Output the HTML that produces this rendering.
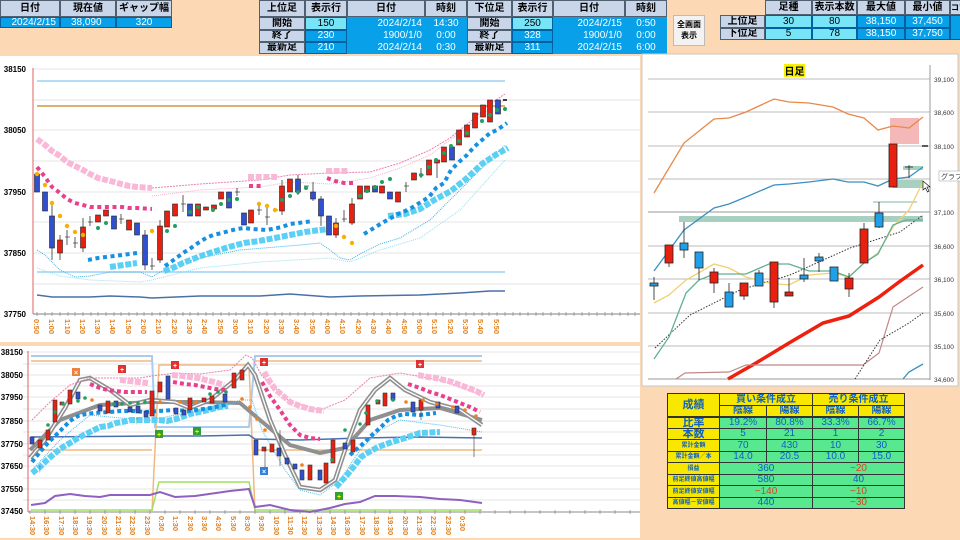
<!DOCTYPE html>
<html><head><meta charset="utf-8">
<style>
*{margin:0;padding:0;box-sizing:border-box}
body{width:960px;height:540px;background:#fdd8b4;position:relative;overflow:hidden;font-family:"Liberation Sans","Noto Sans CJK JP",sans-serif}
.c{position:absolute;font-size:10px;text-align:center;line-height:1;display:flex;align-items:center;justify-content:center;border:1px solid #506070;white-space:nowrap;overflow:hidden}
.h{background:#c9d6ea;color:#000;font-weight:bold}
.b{background:#08a0e8;color:#fff;border-color:#0060a0}
.lc{background:#78e4f8;color:#000;border-color:#0060a0}
svg{position:absolute;left:0;top:0}
</style></head><body>
<div class="c h" style="left:0;top:0;width:60px;height:17px">日付</div>
<div class="c h" style="left:60px;top:0;width:56px;height:17px">現在値</div>
<div class="c h" style="left:116px;top:0;width:56px;height:17px">ギャップ幅</div>
<div class="c b" style="left:0;top:17px;width:60px;height:11px;justify-content:flex-end;padding-right:3px">2024/2/15</div>
<div class="c b" style="left:60px;top:17px;width:56px;height:11px;justify-content:flex-start;padding-left:10px">38,090</div>
<div class="c b" style="left:116px;top:17px;width:56px;height:11px">320</div>
<div class="c h" style="left:259px;top:0;width:46px;height:17px">上位足</div>
<div class="c h" style="left:305px;top:0;width:42px;height:17px">表示行</div>
<div class="c h" style="left:347px;top:0;width:78px;height:17px">日付</div>
<div class="c h" style="left:425px;top:0;width:42px;height:17px">時刻</div>
<div class="c h" style="left:467px;top:0;width:45px;height:17px">下位足</div>
<div class="c h" style="left:512px;top:0;width:41px;height:17px">表示行</div>
<div class="c h" style="left:553px;top:0;width:72px;height:17px">日付</div>
<div class="c h" style="left:625px;top:0;width:42px;height:17px">時刻</div>
<div class="c h" style="left:259px;top:17px;width:46px;height:13px">開始</div>
<div class="c h" style="left:259px;top:30px;width:46px;height:12px">終了</div>
<div class="c h" style="left:259px;top:42px;width:46px;height:12px">最新足</div>
<div class="c lc" style="left:305px;top:17px;width:42px;height:13px">150</div>
<div class="c b" style="left:305px;top:30px;width:42px;height:12px">230</div>
<div class="c b" style="left:305px;top:42px;width:42px;height:12px">210</div>
<div class="c b" style="left:347px;top:17px;width:120px;height:37px;border:none"></div>
<div class="c b" style="left:347px;top:17px;width:78px;height:13px;border:none;justify-content:flex-end;padding-right:3px">2024/2/14</div>
<div class="c b" style="left:347px;top:30px;width:78px;height:12px;border:none;justify-content:flex-end;padding-right:3px">1900/1/0</div>
<div class="c b" style="left:347px;top:42px;width:78px;height:12px;border:none;justify-content:flex-end;padding-right:3px">2024/2/14</div>
<div class="c b" style="left:425px;top:17px;width:42px;height:13px;border:none">14:30</div>
<div class="c b" style="left:425px;top:30px;width:42px;height:12px;border:none">0:00</div>
<div class="c b" style="left:425px;top:42px;width:42px;height:12px;border:none">0:30</div>
<div class="c h" style="left:467px;top:17px;width:45px;height:13px">開始</div>
<div class="c h" style="left:467px;top:30px;width:45px;height:12px">終了</div>
<div class="c h" style="left:467px;top:42px;width:45px;height:12px">最新足</div>
<div class="c lc" style="left:512px;top:17px;width:41px;height:13px">250</div>
<div class="c b" style="left:512px;top:30px;width:41px;height:12px">328</div>
<div class="c b" style="left:512px;top:42px;width:41px;height:12px">311</div>
<div class="c b" style="left:553px;top:17px;width:114px;height:37px;border:none"></div>
<div class="c b" style="left:553px;top:17px;width:72px;height:13px;border:none;justify-content:flex-end;padding-right:3px">2024/2/15</div>
<div class="c b" style="left:553px;top:30px;width:72px;height:12px;border:none;justify-content:flex-end;padding-right:3px">1900/1/0</div>
<div class="c b" style="left:553px;top:42px;width:72px;height:12px;border:none;justify-content:flex-end;padding-right:3px">2024/2/15</div>
<div class="c b" style="left:625px;top:17px;width:42px;height:13px;border:none">0:50</div>
<div class="c b" style="left:625px;top:30px;width:42px;height:12px;border:none">0:00</div>
<div class="c b" style="left:625px;top:42px;width:42px;height:12px;border:none">6:00</div>
<div class="c" style="left:673px;top:15px;width:32px;height:31px;background:#f2f2f2;border-color:#bbb;font-size:8px;font-weight:bold;flex-direction:column;line-height:1.3;white-space:normal">全画面<br>表示</div>
<div class="c h" style="left:765px;top:0;width:47px;height:15px">足種</div>
<div class="c h" style="left:812px;top:0;width:45px;height:15px">表示本数</div>
<div class="c h" style="left:857px;top:0;width:48px;height:15px">最大値</div>
<div class="c h" style="left:905px;top:0;width:45px;height:15px">最小値</div>
<div class="c h" style="left:950px;top:0;width:20px;height:15px;font-size:8px;justify-content:flex-start">コマ</div>
<div class="c h" style="left:720px;top:15px;width:45px;height:13px">上位足</div>
<div class="c h" style="left:720px;top:28px;width:45px;height:12px">下位足</div>
<div class="c lc" style="left:765px;top:15px;width:47px;height:13px">30</div>
<div class="c lc" style="left:765px;top:28px;width:47px;height:12px">5</div>
<div class="c lc" style="left:812px;top:15px;width:45px;height:13px">80</div>
<div class="c lc" style="left:812px;top:28px;width:45px;height:12px">78</div>
<div class="c b" style="left:857px;top:15px;width:48px;height:13px">38,150</div>
<div class="c b" style="left:857px;top:28px;width:48px;height:12px">38,150</div>
<div class="c b" style="left:905px;top:15px;width:45px;height:13px">37,450</div>
<div class="c b" style="left:905px;top:28px;width:45px;height:12px">37,750</div>
<div class="c b" style="left:950px;top:15px;width:20px;height:25px"></div>

<svg width="960" height="540" viewBox="0 0 960 540" font-family="Liberation Sans, sans-serif">
<rect x="0" y="56" width="640" height="286" fill="#fff"/>
<rect x="0" y="346" width="640" height="192" fill="#fff"/>
<rect x="642" y="54" width="316" height="332" fill="#fff" stroke="#c8c8c8"/>

<g stroke="#e4e4e4" stroke-width="1">
<line x1="33" y1="69" x2="640" y2="69"/><line x1="33" y1="100" x2="640" y2="100"/><line x1="33" y1="130" x2="640" y2="130"/><line x1="33" y1="161" x2="640" y2="161"/><line x1="33" y1="192" x2="640" y2="192"/><line x1="33" y1="222" x2="640" y2="222"/><line x1="33" y1="253" x2="640" y2="253"/><line x1="33" y1="284" x2="640" y2="284"/>
</g>
<line x1="33" y1="68" x2="33" y2="314" stroke="#e06060"/>
<line x1="33" y1="314" x2="640" y2="314" stroke="#808080"/>
<g font-size="8" font-weight="bold" fill="#000" text-anchor="end">
<text x="26" y="72">38150</text><text x="26" y="133">38050</text><text x="26" y="195">37950</text><text x="26" y="256">37850</text><text x="26" y="317">37750</text>
</g>
<line x1="37" y1="81" x2="505" y2="81" stroke="#9cd0f4" stroke-width="1.5"/>
<line x1="37" y1="106" x2="505" y2="106" stroke="#e0b070" stroke-width="2"/>
<line x1="37" y1="272" x2="505" y2="272" stroke="#9cd0f4" stroke-width="1.5"/>
<polyline fill="none" stroke="#4a70a8" stroke-width="1.5" points="37,295 52,297 90,297 110,296 140,297 152,298 200,296 260,296 290,294 330,297 360,296 420,295 460,293 490,291 505,291"/>
<polyline fill="none" stroke="#e880b0" stroke-width="1" stroke-dasharray="2 1" points="152,188 200,184 260,180 290,175 330,173 370,172 400,163 430,150 450,138 470,122 490,104 505,94"/>
<polyline fill="none" stroke="#f4b0d0" stroke-width="1" stroke-dasharray="1 1" points="152,196 200,190 260,187 290,182 330,184 370,178 400,168 430,155 450,140 470,125 490,108 505,100"/>
<polyline fill="none" stroke="#40b0e0" stroke-width="1" stroke-dasharray="1 1" points="37,250 45,255 52,262 60,270 75,277 90,276 110,272 140,272 152,277 160,272 175,266 200,258 240,250 300,245 320,243 330,250 340,258 350,260 360,254 380,244 400,238 430,220 450,200 470,180 490,160 505,145"/>
<polyline fill="none" stroke="#90e0f0" stroke-width="1" stroke-dasharray="1 1" points="37,268 60,276 90,280 140,282 152,280 200,268 260,262 330,258 350,262 380,250 420,238 460,210 505,160"/>
<g fill="none" stroke-dasharray="6 1.7">
<polyline stroke="#f9b8d8" stroke-width="6" points="37,139 45,145 52,151 60,156 67,162 75,166 83,170 90,174 98,178 106,180 114,182 121,184 129,186 137,187 152,188"/>
<polyline stroke="#f9b8d8" stroke-width="6" points="248,177 278,177"/>
<polyline stroke="#f9b8d8" stroke-width="6" points="326,171 348,171"/>
<polyline stroke="#5cd0f4" stroke-width="6" points="110,267 137,263"/>
<polyline stroke="#5cd0f4" stroke-width="6" points="164,271 175,267 183,263 198,257 213,252 229,247 244,243 259,241 275,238 290,235 305,232 320,230 330,229"/>
<polyline stroke="#5cd0f4" stroke-width="6" points="388,216 405,214 420,209 436,199 451,191 466,179 482,164 497,154 508,148"/>
</g>
<g fill="none" stroke-dasharray="4 3.6">
<polyline stroke="#e8408c" stroke-width="4" points="37,167 45,177 52,187 60,193 67,199 75,203 83,205 90,207 98,207 106,207 114,207 122,207 129,208 137,208 152,209"/>
<polyline stroke="#e8408c" stroke-width="4" points="249,186 262,186"/>
<polyline stroke="#e8408c" stroke-width="4" points="327,178 335,181 344,183 354,183"/>
<polyline stroke="#1890e0" stroke-width="4" points="88,260 98,258 106,257 114,256 122,255 137,253"/>
<polyline stroke="#1890e0" stroke-width="4" points="165,266 175,259 183,253 191,248 198,243 206,238 213,235 222,233 229,231 237,229 244,228 252,229 267,230 282,227 290,224 298,223 313,221"/>
<polyline stroke="#1890e0" stroke-width="4" points="364,234 374,228 382,223 391,218 398,214 405,211 413,207 421,202 429,197 436,188 444,183 451,170 459,162 467,155 474,147 482,140 490,133 497,130 507,123"/>
</g>
<g stroke="#333" stroke-width="0.8">
<line x1="52" y1="205" x2="52" y2="260"/><line x1="60" y1="235" x2="60" y2="260"/><line x1="67" y1="230" x2="67" y2="245"/><line x1="75" y1="237" x2="75" y2="248"/><line x1="83" y1="218" x2="83" y2="252"/><line x1="90" y1="216" x2="90" y2="226"/><line x1="121" y1="214" x2="121" y2="224"/><line x1="145" y1="230" x2="145" y2="270"/><line x1="152" y1="258" x2="152" y2="270"/><line x1="160" y1="220" x2="160" y2="263"/><line x1="183" y1="195" x2="183" y2="212"/><line x1="237" y1="188" x2="237" y2="196"/><line x1="259" y1="205" x2="259" y2="215"/><line x1="267" y1="208" x2="267" y2="225"/><line x1="282" y1="180" x2="282" y2="215"/><line x1="298" y1="175" x2="298" y2="195"/><line x1="313" y1="182" x2="313" y2="201"/><line x1="321" y1="196" x2="321" y2="226"/><line x1="336" y1="218" x2="336" y2="238"/><line x1="344" y1="210" x2="344" y2="222"/><line x1="352" y1="198" x2="352" y2="225"/><line x1="406" y1="182" x2="406" y2="192"/><line x1="421" y1="168" x2="421" y2="178"/><line x1="437" y1="160" x2="437" y2="178"/>
</g>
<g stroke="#222" stroke-width="0.6">
<rect x="34.5" y="174" width="5" height="18" fill="#3050d0"/><rect x="42.5" y="192" width="5" height="19" fill="#3050d0"/><rect x="49.5" y="216" width="5" height="32" fill="#3050d0"/><rect x="57.5" y="240" width="5" height="13" fill="#e82010"/><rect x="80.5" y="227" width="5" height="21" fill="#e82010"/><rect x="95.5" y="215" width="5" height="7" fill="#e82010"/><rect x="103.5" y="210" width="5" height="6" fill="#e82010"/><rect x="111.5" y="216" width="5" height="13" fill="#3050d0"/><rect x="126.5" y="220" width="5" height="10" fill="#e82010"/><rect x="134.5" y="223" width="5" height="12" fill="#3050d0"/><rect x="142.5" y="235" width="5" height="30" fill="#3050d0"/><rect x="157.5" y="226" width="5" height="34" fill="#e82010"/><rect x="164.5" y="211" width="5" height="16" fill="#e82010"/><rect x="172.5" y="204" width="5" height="12" fill="#e82010"/><rect x="187.5" y="204" width="5" height="12" fill="#3050d0"/><rect x="195.5" y="204" width="5" height="12" fill="#e82010"/><rect x="203.5" y="207" width="5" height="3" fill="#e82010"/><rect x="211.5" y="205" width="5" height="4" fill="#e82010"/><rect x="218.5" y="192" width="5" height="7" fill="#e82010"/><rect x="226.5" y="192" width="5" height="16" fill="#3050d0"/><rect x="241.5" y="213" width="5" height="12" fill="#3050d0"/><rect x="248.5" y="210" width="5" height="13" fill="#e82010"/><rect x="279.5" y="186" width="5" height="25" fill="#e82010"/><rect x="287.5" y="179" width="5" height="13" fill="#e82010"/><rect x="295.5" y="179" width="5" height="13" fill="#3050d0"/><rect x="310.5" y="192" width="5" height="7" fill="#3050d0"/><rect x="318.5" y="199" width="5" height="17" fill="#3050d0"/><rect x="326.5" y="216" width="5" height="19" fill="#3050d0"/><rect x="333.5" y="223" width="5" height="12" fill="#e82010"/><rect x="349.5" y="204" width="5" height="19" fill="#e82010"/><rect x="357.5" y="186" width="5" height="13" fill="#e82010"/><rect x="364.5" y="186" width="5" height="6" fill="#e82010"/><rect x="372.5" y="186" width="5" height="6" fill="#3050d0"/><rect x="379.5" y="186" width="5" height="7" fill="#e82010"/><rect x="387.5" y="192" width="5" height="7" fill="#3050d0"/><rect x="395.5" y="192" width="5" height="10" fill="#e82010"/><rect x="411.5" y="173" width="5" height="7" fill="#e82010"/><rect x="426.5" y="160" width="5" height="15" fill="#e82010"/><rect x="434.5" y="160" width="5" height="3" fill="#e82010"/><rect x="441.5" y="147" width="5" height="15" fill="#e82010"/><rect x="449.5" y="147" width="5" height="13" fill="#3050d0"/><rect x="456.5" y="130" width="5" height="15" fill="#e82010"/><rect x="464.5" y="125" width="5" height="12" fill="#e82010"/><rect x="472.5" y="113" width="5" height="15" fill="#e82010"/><rect x="480.5" y="105" width="5" height="12" fill="#e82010"/><rect x="487.5" y="100" width="5" height="22" fill="#e82010"/><rect x="495.5" y="100" width="5" height="14" fill="#3050d0"/>
<line x1="65" y1="237" x2="70" y2="237"/><line x1="73" y1="243" x2="78" y2="243"/><line x1="88" y1="222" x2="93" y2="222"/><line x1="119" y1="219" x2="124" y2="219"/><line x1="150" y1="266" x2="155" y2="266"/><line x1="181" y1="204" x2="186" y2="204"/><line x1="235" y1="192" x2="240" y2="192"/><line x1="257" y1="210" x2="262" y2="210"/><line x1="265" y1="217" x2="270" y2="217"/><line x1="273" y1="210" x2="278" y2="210"/><line x1="304" y1="186" x2="309" y2="186"/><line x1="342" y1="219" x2="347" y2="219"/><line x1="404" y1="186" x2="409" y2="186"/><line x1="419" y1="175" x2="424" y2="175"/><line x1="503" y1="100" x2="507" y2="100" stroke="#000" stroke-width="1.5"/>
</g>
<g fill="#f8b000">
<circle cx="37" cy="174" r="2.2"/><circle cx="45" cy="185" r="2.2"/><circle cx="52" cy="203" r="2.2"/><circle cx="60" cy="216" r="2.2"/><circle cx="67" cy="226" r="2.2"/><circle cx="75" cy="232" r="2.2"/><circle cx="83" cy="235" r="2.2"/><circle cx="152" cy="231" r="2.2"/><circle cx="259" cy="204" r="2.2"/><circle cx="267" cy="206" r="2.2"/><circle cx="275" cy="210" r="2.2"/><circle cx="336" cy="226" r="2.2"/><circle cx="344" cy="237" r="2.2"/><circle cx="352" cy="243" r="2.2"/>
</g>
<g fill="#20a060">
<circle cx="98" cy="228" r="2"/><circle cx="106" cy="223" r="2"/><circle cx="167" cy="231" r="2"/><circle cx="175" cy="226" r="2"/><circle cx="190" cy="212" r="2"/><circle cx="198" cy="207" r="2"/><circle cx="213" cy="210" r="2"/><circle cx="221" cy="204" r="2"/><circle cx="229" cy="200" r="2"/><circle cx="237" cy="199" r="2"/><circle cx="282" cy="200" r="2"/><circle cx="290" cy="196" r="2"/><circle cx="298" cy="192" r="2"/><circle cx="306" cy="188" r="2"/><circle cx="360" cy="196" r="2"/><circle cx="367" cy="191" r="2"/><circle cx="375" cy="187" r="2"/><circle cx="382" cy="182" r="2"/><circle cx="390" cy="179" r="2"/><circle cx="421" cy="175" r="2"/><circle cx="429" cy="167" r="2"/><circle cx="436" cy="160" r="2"/><circle cx="444" cy="153" r="2"/><circle cx="451" cy="146" r="2"/><circle cx="459" cy="141" r="2"/><circle cx="467" cy="133" r="2"/><circle cx="482" cy="121" r="2"/><circle cx="490" cy="115" r="2"/><circle cx="497" cy="110" r="2"/><circle cx="505" cy="109" r="2"/>
</g>
<path stroke="#888" stroke-width="0.7" d="M37 312v4M45 312v4M52 312v4M60 312v4M68 312v4M75 312v4M83 312v4M91 312v4M98 312v4M106 312v4M114 312v4M121 312v4M129 312v4M137 312v4M144 312v4M152 312v4M160 312v4M167 312v4M175 312v4M183 312v4M190 312v4M198 312v4M206 312v4M213 312v4M221 312v4M229 312v4M236 312v4M244 312v4M252 312v4M259 312v4M267 312v4M275 312v4M282 312v4M290 312v4M298 312v4M305 312v4M313 312v4M321 312v4M328 312v4M336 312v4M344 312v4M351 312v4M359 312v4M367 312v4M374 312v4M382 312v4M390 312v4M397 312v4M405 312v4M413 312v4M420 312v4M428 312v4M436 312v4M443 312v4M451 312v4M459 312v4M466 312v4M474 312v4M482 312v4M489 312v4M497 312v4M505 312v4M513 312v4M520 312v4M528 312v4M536 312v4M543 312v4M551 312v4M559 312v4M566 312v4M574 312v4M582 312v4M589 312v4M597 312v4M605 312v4M612 312v4M620 312v4M628 312v4M635 312v4"/>
<g font-size="7.5" fill="#e08020" font-weight="bold">
<text transform="translate(34,319) rotate(90)">0:50</text><text transform="translate(49,319) rotate(90)">1:00</text><text transform="translate(65,319) rotate(90)">1:10</text><text transform="translate(80,319) rotate(90)">1:20</text><text transform="translate(95,319) rotate(90)">1:30</text><text transform="translate(110,319) rotate(90)">1:40</text><text transform="translate(126,319) rotate(90)">1:50</text><text transform="translate(141,319) rotate(90)">2:00</text><text transform="translate(156,319) rotate(90)">2:10</text><text transform="translate(172,319) rotate(90)">2:20</text><text transform="translate(187,319) rotate(90)">2:30</text><text transform="translate(202,319) rotate(90)">2:40</text><text transform="translate(218,319) rotate(90)">2:50</text><text transform="translate(233,319) rotate(90)">3:00</text><text transform="translate(248,319) rotate(90)">3:10</text><text transform="translate(264,319) rotate(90)">3:20</text><text transform="translate(279,319) rotate(90)">3:30</text><text transform="translate(294,319) rotate(90)">3:40</text><text transform="translate(310,319) rotate(90)">3:50</text><text transform="translate(325,319) rotate(90)">4:00</text><text transform="translate(340,319) rotate(90)">4:10</text><text transform="translate(356,319) rotate(90)">4:20</text><text transform="translate(371,319) rotate(90)">4:30</text><text transform="translate(386,319) rotate(90)">4:40</text><text transform="translate(402,319) rotate(90)">4:50</text><text transform="translate(417,319) rotate(90)">5:00</text><text transform="translate(432,319) rotate(90)">5:10</text><text transform="translate(448,319) rotate(90)">5:20</text><text transform="translate(463,319) rotate(90)">5:30</text><text transform="translate(478,319) rotate(90)">5:40</text><text transform="translate(494,319) rotate(90)">5:50</text>
</g>

<g stroke="#e6e6e6">
<line x1="23" y1="352" x2="640" y2="352"/><line x1="23" y1="364" x2="640" y2="364"/><line x1="23" y1="375" x2="640" y2="375"/><line x1="23" y1="386" x2="640" y2="386"/><line x1="23" y1="397" x2="640" y2="397"/><line x1="23" y1="409" x2="640" y2="409"/><line x1="23" y1="421" x2="640" y2="421"/><line x1="23" y1="432" x2="640" y2="432"/><line x1="23" y1="444" x2="640" y2="444"/><line x1="23" y1="455" x2="640" y2="455"/><line x1="23" y1="466" x2="640" y2="466"/><line x1="23" y1="478" x2="640" y2="478"/><line x1="23" y1="489" x2="640" y2="489"/><line x1="23" y1="500" x2="640" y2="500"/>
</g>
<line x1="28" y1="351" x2="28" y2="512" stroke="#e06060"/>
<line x1="28" y1="512" x2="640" y2="512" stroke="#888"/>
<g font-size="8" font-weight="bold" fill="#000" text-anchor="end">
<text x="23" y="355">38150</text><text x="23" y="378">38050</text><text x="23" y="400">37950</text><text x="23" y="424">37850</text><text x="23" y="447">37750</text><text x="23" y="469">37650</text><text x="23" y="492">37550</text><text x="23" y="514">37450</text>
</g>
<polyline fill="none" stroke="#a8ccf0" stroke-width="2" points="31,356 152,356 155,427 249,427 255,356 482,356"/>
<g fill="none" stroke="#f0b880" stroke-width="1.5">
<polyline points="31,361 152,361"/><polyline points="255,361 482,361"/><polyline points="31,450 152,450"/><polyline points="255,450 482,450"/><polyline points="152,512 159,365 249,365 255,512"/>
</g>
<polyline fill="none" stroke="#a0e060" stroke-width="1.5" points="31,510 152,510 159,482 249,482 255,510 482,510"/>
<polyline fill="none" stroke="#9060c0" stroke-width="2" points="31,505 45,503 55,496 70,494 85,496 100,497 110,495 150,495 160,492 175,497 195,496 230,491 249,489 255,507 270,505 290,510 310,512 330,508 345,504 360,502 375,496 395,496 420,497 440,499 460,500 482,503"/>
<polyline fill="none" stroke="#4a70b0" stroke-width="1.5" points="31,437 152,436 200,436 249,435 255,439 300,440 360,438 420,437 482,438"/>
<polyline fill="none" stroke="#909090" stroke-width="4" points="30,450 60,420 100,405 150,402 200,402 240,403 260,420 290,445 320,453 345,448 370,420 400,410 440,408 482,420"/>
<polyline fill="none" stroke="#909090" stroke-width="4.5" points="30,458 45,440 65,408 80,380 90,378 110,390 130,405 150,400 175,402 190,408 210,400 235,380 248,365 255,375 270,420 285,455 300,487 320,490 335,480 345,450 360,410 375,390 390,378 405,390 430,402 460,410 482,425"/>
<polyline fill="none" stroke="#fff" stroke-width="1.3" points="30,458 45,440 65,408 80,380 90,378 110,390 130,405 150,400 175,402 190,408 210,400 235,380 248,365 255,375 270,420 285,455 300,487 320,490 335,480 345,450 360,410 375,390 390,378 405,390 430,402 460,410 482,425"/>
<polyline fill="none" stroke="#e880b0" stroke-width="1" stroke-dasharray="2 1" points="32,420 50,402 70,385 90,378 110,378 140,378 152,376 175,373 200,374 230,370 246,355 252,358 262,376 290,402 320,410 345,400 370,378 400,373 440,380 482,395"/>
<polyline fill="none" stroke="#50b8e8" stroke-width="1" stroke-dasharray="1 1" points="32,470 60,440 90,415 120,418 152,420 180,414 215,410 240,400 252,400 262,430 285,470 300,490 320,495 340,480 360,450 380,430 400,420 440,425 482,432"/>
<g fill="none" stroke-dasharray="6 1.5">
<polyline stroke="#f9b8d8" stroke-width="6" points="120,380 148,383"/>
<polyline stroke="#f9b8d8" stroke-width="6" points="172,375 183,376 190,377 198,378 206,380 214,382 224,385"/>
<polyline stroke="#f9b8d8" stroke-width="6" points="264,372 270,382 275,389 282,395 290,402 300,406 310,409 324,411"/>
<polyline stroke="#f9b8d8" stroke-width="6" points="418,375 428,377 436,378 444,380 452,382 460,385 468,388 476,391 484,395"/>
<polyline stroke="#5cd0f4" stroke-width="6" points="32,473 40,467 47,460 55,453 63,447 70,443 78,438 86,434 94,430 100,427 108,426 116,423 122,422 131,420 145,420 159,420 167,421 176,419 190,414 204,411 220,407 228,406"/>
<polyline stroke="#5cd0f4" stroke-width="6" points="336,487 347,475 355,465 361,457 369,452 378,447 392,442 408,437 420,433 440,432"/>
</g>
<g fill="none" stroke-dasharray="4 3">
<polyline stroke="#1890e0" stroke-width="4" points="32,462 40,452 47,444 55,436 63,428 70,421 78,416 86,414 94,413 110,412 120,411 135,411 145,412 159,411 175,410 190,411 210,408 226,405"/>
<polyline stroke="#1890e0" stroke-width="4" points="350,455 358,448 365,442 372,435 380,428 388,420 396,416 405,414 420,415 436,413"/>
<polyline stroke="#e8408c" stroke-width="4" points="90,384 100,388 108,390 116,391 124,392 132,392 147,392"/>
<polyline stroke="#e8408c" stroke-width="4" points="173,382 185,384 195,385 205,387 215,389 226,390"/>
<polyline stroke="#e8408c" stroke-width="4" points="262,382 270,396 280,410 290,425 300,435 310,438 320,439"/>
<polyline stroke="#e8408c" stroke-width="4" points="408,384 420,388 430,392 440,395 450,399 460,403 470,407 480,412"/>
</g>
<g stroke="#333" stroke-width="0.6">
<rect x="30" y="437" width="4" height="7" fill="#3050d0"/><rect x="38" y="440" width="4" height="8" fill="#e82010"/><rect x="46" y="430" width="4" height="10" fill="#e82010"/><rect x="53" y="400" width="4" height="22" fill="#e82010"/><rect x="60" y="402" width="4" height="3" fill="#e82010"/><rect x="68" y="390" width="4" height="14" fill="#e82010"/><rect x="76" y="392" width="4" height="7" fill="#3050d0"/><rect x="98" y="405" width="4" height="6" fill="#3050d0"/><rect x="106" y="401" width="4" height="12" fill="#e82010"/><rect x="114" y="401" width="4" height="6" fill="#3050d0"/><rect x="128" y="407" width="4" height="5" fill="#3050d0"/><rect x="136" y="406" width="4" height="7" fill="#3050d0"/><rect x="144" y="411" width="4" height="6" fill="#3050d0"/><rect x="150" y="391" width="4" height="25" fill="#e82010"/><rect x="158" y="382" width="4" height="10" fill="#e82010"/><rect x="166" y="376" width="4" height="23" fill="#3050d0"/><rect x="174" y="408" width="4" height="6" fill="#3050d0"/><rect x="182" y="410" width="4" height="5" fill="#3050d0"/><rect x="188" y="398" width="4" height="12" fill="#e82010"/><rect x="202" y="398" width="4" height="4" fill="#e82010"/><rect x="210" y="396" width="4" height="7" fill="#e82010"/><rect x="223" y="394" width="4" height="8" fill="#3050d0"/><rect x="232" y="373" width="4" height="15" fill="#e82010"/><rect x="240" y="370" width="4" height="10" fill="#e82010"/><rect x="254" y="440" width="4" height="15" fill="#3050d0"/><rect x="262" y="447" width="4" height="4" fill="#e82010"/><rect x="270" y="444" width="4" height="8" fill="#e82010"/><rect x="277" y="448" width="4" height="8" fill="#3050d0"/><rect x="285" y="458" width="4" height="6" fill="#3050d0"/><rect x="293" y="464" width="4" height="5" fill="#3050d0"/><rect x="300" y="470" width="4" height="10" fill="#3050d0"/><rect x="308" y="465" width="4" height="15" fill="#e82010"/><rect x="318" y="470" width="4" height="10" fill="#3050d0"/><rect x="324" y="463" width="4" height="20" fill="#e82010"/><rect x="331" y="440" width="4" height="23" fill="#e82010"/><rect x="343" y="443" width="4" height="6" fill="#3050d0"/><rect x="351" y="440" width="4" height="12" fill="#e82010"/><rect x="366" y="405" width="4" height="20" fill="#e82010"/><rect x="376" y="400" width="4" height="4" fill="#e82010"/><rect x="383" y="393" width="4" height="13" fill="#e82010"/><rect x="391" y="393" width="4" height="7" fill="#3050d0"/><rect x="411" y="402" width="4" height="10" fill="#3050d0"/><rect x="419" y="400" width="4" height="10" fill="#e82010"/><rect x="436" y="402" width="4" height="6" fill="#3050d0"/><rect x="455" y="406" width="4" height="7" fill="#3050d0"/><rect x="472" y="428" width="4" height="7" fill="#e82010"/>
<line x1="474" y1="435" x2="474" y2="457"/><line x1="421" y1="410" x2="421" y2="420"/><line x1="280" y1="430" x2="280" y2="466"/><line x1="265" y1="448" x2="265" y2="468"/>
</g>
<g fill="#20a060"><circle cx="48" cy="425" r="1.8"/><circle cx="55" cy="412" r="1.8"/><circle cx="63" cy="404" r="1.8"/><circle cx="78" cy="401" r="1.8"/><circle cx="85" cy="398" r="1.8"/><circle cx="114" cy="404" r="1.8"/><circle cx="122" cy="404" r="1.8"/><circle cx="130" cy="403" r="1.8"/><circle cx="138" cy="403" r="1.8"/><circle cx="145" cy="402" r="1.8"/><circle cx="210" cy="394" r="1.8"/><circle cx="218" cy="392" r="1.8"/><circle cx="226" cy="392" r="1.8"/><circle cx="332" cy="460" r="1.8"/><circle cx="345" cy="430" r="1.8"/><circle cx="360" cy="424" r="1.8"/><circle cx="366" cy="413" r="1.8"/><circle cx="377" cy="401" r="1.8"/><circle cx="393" cy="400" r="1.8"/></g>
<g fill="#f08020"><circle cx="92" cy="400" r="1.8"/><circle cx="160" cy="402" r="1.8"/><circle cx="180" cy="402" r="1.8"/><circle cx="196" cy="402" r="1.8"/><circle cx="242" cy="399" r="1.8"/><circle cx="250" cy="407" r="1.8"/><circle cx="257" cy="419" r="1.8"/><circle cx="265" cy="430" r="1.8"/><circle cx="302" cy="465" r="1.8"/><circle cx="406" cy="402" r="1.8"/><circle cx="423" cy="400" r="1.8"/><circle cx="437" cy="404" r="1.8"/><circle cx="453" cy="407" r="1.8"/><circle cx="465" cy="410" r="1.8"/><circle cx="476" cy="416" r="1.8"/></g>
<g font-size="7" font-weight="bold" text-anchor="middle">
<rect x="72" y="368" width="8" height="8" fill="#f08040"/><text x="76" y="375" fill="#fff">×</text>
<rect x="118" y="365" width="8" height="8" fill="#e03030"/><text x="122" y="372" fill="#fff">+</text>
<rect x="171" y="361" width="8" height="8" fill="#e03030"/><text x="175" y="368" fill="#fff">+</text>
<rect x="260" y="358" width="8" height="8" fill="#e03030"/><text x="264" y="365" fill="#fff">+</text>
<rect x="416" y="360" width="8" height="8" fill="#e03030"/><text x="420" y="367" fill="#fff">+</text>
<rect x="155" y="430" width="8" height="8" fill="#30a030"/><text x="159" y="437" fill="#ff0">+</text>
<rect x="193" y="427" width="8" height="8" fill="#30a030"/><text x="197" y="434" fill="#ff0">+</text>
<rect x="335" y="492" width="8" height="8" fill="#30a030"/><text x="339" y="499" fill="#ff0">+</text>
<rect x="260" y="467" width="8" height="8" fill="#3080e0"/><text x="264" y="474" fill="#fff">×</text>
<text x="40" y="472" fill="#3090e0" font-size="12">↑</text><text x="137" y="424" fill="#50b080" font-size="12">↑</text>
</g>
<path stroke="#888" stroke-width="0.7" d="M30 510v4M45 510v4M60 510v4M75 510v4M90 510v4M105 510v4M120 510v4M135 510v4M150 510v4M165 510v4M180 510v4M195 510v4M210 510v4M225 510v4M240 510v4M255 510v4M270 510v4M285 510v4M300 510v4M315 510v4M330 510v4M345 510v4M360 510v4M375 510v4M390 510v4M405 510v4M420 510v4M435 510v4M450 510v4M465 510v4M480 510v4M495 510v4M510 510v4M525 510v4M540 510v4M555 510v4M570 510v4M585 510v4M600 510v4M615 510v4M630 510v4"/>
<g font-size="7.5" fill="#e08020" font-weight="bold">
<text transform="translate(30,516) rotate(90)">14:30</text><text transform="translate(44,516) rotate(90)">16:30</text><text transform="translate(59,516) rotate(90)">17:30</text><text transform="translate(73,516) rotate(90)">18:30</text><text transform="translate(87,516) rotate(90)">19:30</text><text transform="translate(102,516) rotate(90)">20:30</text><text transform="translate(116,516) rotate(90)">21:30</text><text transform="translate(130,516) rotate(90)">22:30</text><text transform="translate(145,516) rotate(90)">23:30</text><text transform="translate(159,516) rotate(90)">0:30</text><text transform="translate(173,516) rotate(90)">1:30</text><text transform="translate(188,516) rotate(90)">2:30</text><text transform="translate(202,516) rotate(90)">3:30</text><text transform="translate(216,516) rotate(90)">4:30</text><text transform="translate(231,516) rotate(90)">5:30</text><text transform="translate(245,516) rotate(90)">8:30</text><text transform="translate(259,516) rotate(90)">9:30</text><text transform="translate(274,516) rotate(90)">10:30</text><text transform="translate(288,516) rotate(90)">11:30</text><text transform="translate(302,516) rotate(90)">12:30</text><text transform="translate(317,516) rotate(90)">13:30</text><text transform="translate(331,516) rotate(90)">14:30</text><text transform="translate(345,516) rotate(90)">16:30</text><text transform="translate(360,516) rotate(90)">17:30</text><text transform="translate(374,516) rotate(90)">18:30</text><text transform="translate(388,516) rotate(90)">19:30</text><text transform="translate(403,516) rotate(90)">20:30</text><text transform="translate(417,516) rotate(90)">21:30</text><text transform="translate(431,516) rotate(90)">22:30</text><text transform="translate(446,516) rotate(90)">23:30</text><text transform="translate(460,516) rotate(90)">0:30</text>
</g>

<g stroke="#bbb">
<line x1="648" y1="79" x2="930" y2="79"/><line x1="648" y1="112" x2="930" y2="112"/><line x1="648" y1="146" x2="930" y2="146"/><line x1="648" y1="179" x2="930" y2="179"/><line x1="648" y1="212" x2="930" y2="212" stroke="#999"/><line x1="648" y1="246" x2="930" y2="246"/><line x1="648" y1="279" x2="930" y2="279"/><line x1="648" y1="313" x2="930" y2="313"/><line x1="648" y1="346" x2="930" y2="346"/><line x1="648" y1="379" x2="930" y2="379" stroke="#999"/>
</g>
<line x1="930" y1="65" x2="930" y2="380" stroke="#999"/>
<g font-size="6.5" fill="#333" text-anchor="start">
<text x="934" y="82">39,100</text><text x="934" y="115">38,600</text><text x="934" y="149">38,100</text><text x="934" y="215">37,100</text><text x="934" y="249">36,600</text><text x="934" y="282">36,100</text><text x="934" y="316">35,600</text><text x="934" y="349">35,100</text><text x="934" y="382">34,600</text>
</g>
<rect x="784" y="64" width="21" height="13" fill="#f8f000"/>
<text x="794.5" y="75" font-size="10" font-weight="bold" text-anchor="middle" font-family="Liberation Sans, Noto Sans CJK JP, sans-serif">日足</text>
<rect x="679" y="216" width="244" height="6" fill="#a8d0c0"/>
<rect x="890" y="118" width="29" height="26" fill="#f4b8b8"/>
<rect x="893" y="180" width="30" height="8" fill="#a8d0c0"/>
<rect x="903" y="166" width="20" height="4" fill="#a8d0c0"/>
<line x1="873" y1="202" x2="917" y2="202" stroke="#a8d0c0" stroke-width="1.5"/>
<polyline fill="none" stroke="#e8884a" stroke-width="1.3" points="654,193 684,143 714,119 729,118 746,112 774,99 789,102 809,103 833,107 848,114 864,118 878,130 893,126 909,128 923,117"/>
<polyline fill="none" stroke="#3a90c0" stroke-width="1.3" points="654,271 684,230 714,208 729,204 746,197 774,185 789,184 809,182 833,179 848,182 864,182 878,186 893,179 909,177 923,167"/>
<polyline fill="none" stroke="#ee2010" stroke-width="3.5" points="728,379 756,363 789,343 823,323 849,316 879,297 899,282 923,265"/>
<polyline fill="none" stroke="#c08888" stroke-width="1.2" points="676,379 685,373 729,372 746,365 863,365 879,353 893,307 923,287"/>
<polyline fill="none" stroke="#333" stroke-width="1" stroke-dasharray="1.5 1.5" points="655,348 690,315 740,290 790,275 850,248 900,232 923,215"/>
<polyline fill="none" stroke="#333" stroke-width="1" stroke-dasharray="1.5 1.5" points="855,379 880,340 909,323 923,313"/>
<polyline fill="none" stroke="#3a90c0" stroke-width="1.3" points="903,379 909,372 923,364"/>
<polyline fill="none" stroke="#f0d070" stroke-width="1.3" points="654,303 669,295 686,280 714,264 729,268 746,277 769,283 789,285 809,275 833,273 849,277 864,263 878,253 893,227 909,210 923,182"/>
<polyline fill="none" stroke="#60b090" stroke-width="1.3" points="654,359 669,337 686,293 699,280 714,274 746,274 769,264 789,264 809,271 833,271 849,277 864,263 878,254 893,225 906,220 923,220"/>
<g stroke="#222" stroke-width="0.8">
<line x1="654" y1="277" x2="654" y2="300"/><line x1="669" y1="245" x2="669" y2="267"/><line x1="684" y1="222" x2="684" y2="258"/><line x1="699" y1="252" x2="699" y2="280"/><line x1="714" y1="268" x2="714" y2="293"/><line x1="729" y1="283" x2="729" y2="307"/><line x1="744" y1="283" x2="744" y2="300"/><line x1="759" y1="270" x2="759" y2="286"/><line x1="774" y1="262" x2="774" y2="308"/><line x1="789" y1="278" x2="789" y2="296"/><line x1="804" y1="258" x2="804" y2="282"/><line x1="819" y1="253" x2="819" y2="272"/><line x1="849" y1="273" x2="849" y2="297"/><line x1="864" y1="223" x2="864" y2="263"/><line x1="879" y1="202" x2="879" y2="228"/><line x1="909" y1="165" x2="909" y2="178"/>
<rect x="650" y="283" width="8" height="3" fill="#20a0e8"/><rect x="665" y="245" width="8" height="18" fill="#e82010"/><rect x="680" y="243" width="8" height="7" fill="#20a0e8"/><rect x="695" y="252" width="8" height="16" fill="#20a0e8"/><rect x="710" y="272" width="8" height="11" fill="#e82010"/><rect x="725" y="292" width="8" height="15" fill="#20a0e8"/><rect x="740" y="283" width="8" height="13" fill="#e82010"/><rect x="755" y="273" width="8" height="13" fill="#20a0e8"/><rect x="770" y="262" width="8" height="40" fill="#e82010"/><rect x="785" y="292" width="8" height="4" fill="#e82010"/><rect x="800" y="275" width="8" height="4" fill="#20a0e8"/><rect x="815" y="257" width="8" height="4" fill="#20a0e8"/><rect x="830" y="267" width="8" height="14" fill="#20a0e8"/><rect x="845" y="278" width="8" height="11" fill="#e82010"/><rect x="860" y="229" width="8" height="34" fill="#e82010"/><rect x="875" y="213" width="8" height="14" fill="#20a0e8"/><rect x="889" y="144" width="8" height="43" fill="#e82010"/>
<line x1="905" y1="167" x2="913" y2="167"/>
</g>
<line x1="922" y1="146" x2="928" y2="146" stroke="#222" stroke-width="1.5"/>
<rect x="939" y="171" width="22" height="10" fill="#fff" stroke="#aaa" stroke-width="0.6"/>
<text x="941" y="179" font-size="7" fill="#333" font-family="Liberation Sans, Noto Sans CJK JP, sans-serif">グラフ</text>
<path d="M923 181 l0 9 l2.5 -2 l2 4 l1.5 -1 l-2 -4 l3 0 z" fill="#fff" stroke="#000" stroke-width="0.6"/>
</svg>

<div style="position:absolute;left:667px;top:393px;width:238px;height:116px;background:#1e1e1e"></div>
<div style="position:absolute;left:667px;top:393px;font-family:'Liberation Sans','Noto Sans CJK JP',sans-serif">
<style>
.t{position:absolute;display:flex;align-items:center;justify-content:center;font-size:10px;color:#1060c0;border:1px solid #333;line-height:1;white-space:nowrap;overflow:hidden}
.y{background:#f8e800;color:#1060c0;font-weight:bold}
.g{background:#58e890}
.r{color:#e04020}
</style>
<div class="t y" style="left:0;top:0;width:53px;height:24px;font-size:11px">成績</div>
<div class="t y" style="left:52px;top:0;width:94px;height:13px">買い条件成立</div>
<div class="t y" style="left:145px;top:0;width:93px;height:13px">売り条件成立</div>
<div class="t y" style="left:52px;top:12px;width:48px;height:12px">陰線</div>
<div class="t y" style="left:99px;top:12px;width:47px;height:12px">陽線</div>
<div class="t y" style="left:145px;top:12px;width:47px;height:12px">陰線</div>
<div class="t y" style="left:191px;top:12px;width:47px;height:12px">陽線</div>
<div class="t y" style="left:0;top:24px;width:53px;height:12px;font-size:11px">比率</div>
<div class="t y" style="left:0;top:35px;width:53px;height:12px;font-size:11px">本数</div>
<div class="t y" style="left:0;top:46px;width:53px;height:13px;font-size:6px">累計金額</div>
<div class="t y" style="left:0;top:58px;width:53px;height:12px;font-size:6px">累計金額／本</div>
<div class="t y" style="left:0;top:69px;width:53px;height:13px;font-size:6px">損益</div>
<div class="t y" style="left:0;top:81px;width:53px;height:12px;font-size:6px">前足終値高値幅</div>
<div class="t y" style="left:0;top:92px;width:53px;height:13px;font-size:6px">前足終値安値幅</div>
<div class="t y" style="left:0;top:104px;width:53px;height:12px;font-size:6px">高値幅－安値幅</div>
<div class="t g" style="left:52px;top:24px;width:48px;height:12px">19.2%</div><div class="t g" style="left:99px;top:24px;width:47px;height:12px">80.8%</div><div class="t g" style="left:145px;top:24px;width:47px;height:12px">33.3%</div><div class="t g" style="left:191px;top:24px;width:47px;height:12px">66.7%</div>
<div class="t g" style="left:52px;top:35px;width:48px;height:12px">5</div><div class="t g" style="left:99px;top:35px;width:47px;height:12px">21</div><div class="t g" style="left:145px;top:35px;width:47px;height:12px">1</div><div class="t g" style="left:191px;top:35px;width:47px;height:12px">2</div>
<div class="t g" style="left:52px;top:46px;width:48px;height:13px">70</div><div class="t g" style="left:99px;top:46px;width:47px;height:13px">430</div><div class="t g" style="left:145px;top:46px;width:47px;height:13px">10</div><div class="t g" style="left:191px;top:46px;width:47px;height:13px">30</div>
<div class="t g" style="left:52px;top:58px;width:48px;height:12px">14.0</div><div class="t g" style="left:99px;top:58px;width:47px;height:12px">20.5</div><div class="t g" style="left:145px;top:58px;width:47px;height:12px">10.0</div><div class="t g" style="left:191px;top:58px;width:47px;height:12px">15.0</div>
<div class="t g" style="left:52px;top:69px;width:94px;height:13px">360</div><div class="t g r" style="left:145px;top:69px;width:93px;height:13px">−20</div>
<div class="t g" style="left:52px;top:81px;width:94px;height:12px">580</div><div class="t g" style="left:145px;top:81px;width:93px;height:12px">40</div>
<div class="t g r" style="left:52px;top:92px;width:94px;height:13px">−140</div><div class="t g r" style="left:145px;top:92px;width:93px;height:13px">−10</div>
<div class="t g" style="left:52px;top:104px;width:94px;height:12px">440</div><div class="t g r" style="left:145px;top:104px;width:93px;height:12px">−30</div>
</div>
</body></html>
